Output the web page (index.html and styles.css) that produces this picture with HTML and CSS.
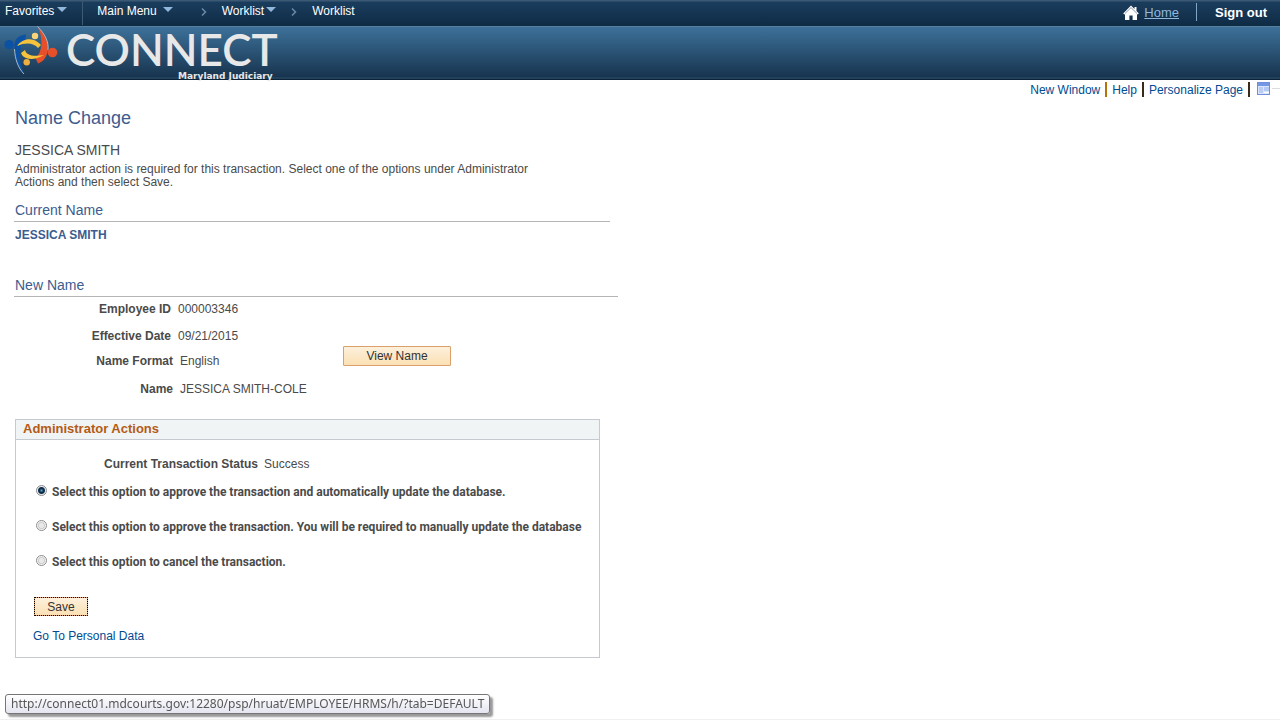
FILE: index.html
```html
<!DOCTYPE html>
<html lang="en">
<head>
<meta charset="utf-8">
<title>Name Change</title>
<link rel="stylesheet" href="styles.css">
</head>
<body>
<header>
  <nav class="topbar" aria-label="Main">
    <button class="menu favorites" type="button">Favorites <span class="caret"></span></button>
    <button class="menu mainmenu" type="button">Main Menu <span class="caret caret-far"></span></button>
    <svg class="chevron first" viewBox="0 0 6 8"><path d="M1 0.5 4.5 4 1 7.5"/></svg>
    <button class="menu" type="button">Worklist <span class="caret caret-near"></span></button>
    <svg class="chevron second" viewBox="0 0 6 8"><path d="M1 0.5 4.5 4 1 7.5"/></svg>
    <a class="crumb" href="#">Worklist</a>
    <div class="session">
      <a class="home" href="#">
        <svg class="home-icon" viewBox="0 0 16 16"><path d="M8 0.5 11.5 4V2h2v4l2.3 2.4-1.2 1.2L14 9v6H9.600v-4.500H6.400V15H2V9l-.6.6L.2 8.400z"/><path class="roof" d="M2 8.500 8 2.600l6 5.900"/></svg>
        <span>Home</span>
      </a>
      <a class="signout" href="#">Sign out</a>
    </div>
  </nav>
  <div class="banner">
    <svg class="logo" viewBox="0 0 56 52">
      <path class="blue" d="M24 7.500C16 8 11.500 13 12.500 22 13 32 16 41 22 47 18 38 17 27 19 19 20 17 24 14 24 7.500z"/>
      <path class="rim" d="M12.500 22C13 32 16 41 22 47"/>
      <circle class="blue" cx="7" cy="17.600" r="4.600"/>
      <path class="red" d="M35.500-.5C43 7 47 15 46 23 45 30 41 35 36 36.500L33.500 31C40 26 42 12 35.500-.5z"/>
      <path class="rim" d="M35.500-.5C43 7 47 15 46 23"/>
      <circle class="red" cx="50.500" cy="25.500" r="4.800"/>
      <path class="gold" d="M15 19C19 13 26 11 32 13c3 1 5 3 7 5l-3 3C32 16 24 15 15 19z"/>
      <path class="gold" d="M19 26l4-3c1 5 8 7 19 5C35 32 29 33 24 31c-3-1-4-3-5-5z"/>
      <circle class="pale" cx="33" cy="9" r="3.200"/>
      <circle class="amber" cx="24.700" cy="35.300" r="3.200"/>
    </svg>
    <div class="brand">
      <div class="brand-name">CONNECT</div>
      <div class="brand-sub">Maryland Judiciary</div>
    </div>
  </div>
</header>
<div class="pagebar">
  <a href="#">New Window</a><a href="#">Help</a><a href="#">Personalize Page</a>
  <svg class="grid-icon" viewBox="0 0 13 13"><rect x=".5" y=".5" width="12" height="12" fill="#d9e5fb" stroke="#6f8fdc"/><rect x="1" y="1" width="11" height="3" fill="#7596e4"/><path d="M2 6h4M2 8h4M2 10h4" stroke="#9bb3ea"/><rect x="7" y="5" width="5" height="4" fill="#b4c8f5"/><path d="M7 10.500h5" stroke="#fff"/></svg>
  <span class="rule"></span>
</div>
<main>
  <h1>Name Change</h1>
  <p class="person">JESSICA SMITH</p>
  <p class="intro">Administrator action is required for this transaction. Select one of the options under Administrator Actions and then select Save.</p>
  <section class="current">
    <h2>Current Name</h2>
    <p class="current-name">JESSICA SMITH</p>
  </section>
  <section class="newname">
    <h2>New Name</h2>
    <div class="details">
      <dl>
        <div class="row"><dt>Employee ID</dt><dd>000003346</dd></div>
        <div class="row close"><dt>Effective Date</dt><dd>09/21/2015</dd></div>
        <div class="row wide"><dt>Name Format</dt><dd>English</dd></div>
        <div class="row wide close"><dt>Name</dt><dd>JESSICA SMITH-COLE</dd></div>
      </dl>
      <button class="btn view" type="button">View Name</button>
    </div>
  </section>
  <form class="actions">
    <h3>Administrator Actions</h3>
    <div class="actions-body">
      <p class="status"><b>Current Transaction Status</b><span>Success</span></p>
      <label class="option"><input type="radio" name="action" checked><span>Select this option to approve the transaction and automatically update the database.</span></label>
      <label class="option"><input type="radio" name="action"><span>Select this option to approve the transaction. You will be required to manually update the database</span></label>
      <label class="option"><input type="radio" name="action"><span>Select this option to cancel the transaction.</span></label>
      <button class="btn save" type="button">Save</button>
      <a class="personal" href="#">Go To Personal Data</a>
    </div>
  </form>
</main>
<div class="url-tip">http://connect01.mdcourts.gov:12280/psp/hruat/EMPLOYEE/HRMS/h/?tab=DEFAULT</div>
</body>
</html>
```
FILE: styles.css
```css
* { box-sizing: border-box; }
body {
  margin: 0;
  min-height: 100vh;
  background: #fff;
  color: #4a4a4a;
  font: 12px/14px "Liberation Sans", Arial, sans-serif;
  border-bottom: 1px solid #f0f0f0;
}
h1, h2, h3, p, dl, dd { margin: 0; font-weight: normal; }
a { color: #004b91; text-decoration: none; }
button { font: inherit; cursor: pointer; }

.topbar {
  display: flex;
  align-items: flex-start;
  height: 26px;
  padding-left: 5px;
  background: linear-gradient(#3b5975 0, #3b5975 1px, #1b3d5d 2px, #0f2b45 100%);
}
.menu {
  display: flex;
  padding: 4px 0 0;
  border: 0;
  background: none;
  color: #fff;
  white-space: nowrap;
}
.favorites { height: 25px; padding-right: 15px; border-right: 1px solid #3d5a75; }
.mainmenu { padding-left: 14px; }
.caret {
  margin: 3px 0 0 3px;
  border: 5px solid transparent;
  border-top-color: #8fb8dc;
  border-bottom: 0;
}
.caret-far { margin-left: 6px; }
.caret-near { margin-left: 2px; }
.chevron { width: 6px; height: 8px; }
.chevron path { fill: none; stroke: #6b8aa6; stroke-width: 1.5; }
.first { margin: 8px 15px 0 28px; }
.second { margin: 8px 15px 0 15px; }
.crumb { padding-top: 4px; color: #fff; }
.session { display: flex; margin-left: auto; padding: 3px 13px 0 0; }
.home {
  display: flex;
  height: 18px;
  padding-right: 17px;
  border-right: 1px solid #7fa6c8;
  color: #8fb8dc;
  font-size: 13px;
  line-height: 20px;
  text-decoration: underline;
}
.home-icon { width: 16px; height: 16px; margin: 2px 5px 0 0; fill: #fff; }
.roof { fill: none; stroke: #8a98a8; stroke-width: 1; }
.signout { padding-left: 18px; color: #fff; font-size: 13px; font-weight: bold; line-height: 20px; }

.banner {
  display: flex;
  height: 54px;
  border-top: 1px solid #57809f;
  border-bottom: 1px solid #0c2438;
  background: linear-gradient(#3d719a, #17344f 50px, #2d4d67 51px, #17344f);
}
.logo { width: 56px; height: 52px; margin-left: 2px; overflow: visible; }
.blue { fill: #0b52a4; }
.red { fill: #e5502a; }
.gold { fill: #f7c23c; }
.pale { fill: #f8d577; }
.amber { fill: #eeae40; }
.rim { fill: none; stroke: #a9bac8; stroke-width: 1; }
.brand { margin-left: 8px; color: #e8e8e8; }
.brand-name { font: 600 44px/44px Lato, sans-serif; }
.brand-sub { padding-right: 5px; font: bold 9px/10px "DejaVu Sans", sans-serif; text-align: right; }

.pagebar { display: flex; justify-content: flex-end; height: 18px; padding-top: 2px; }
.pagebar a { height: 15px; padding: 1px 5px 0 5px; border-right: 2px solid #3a2a18; white-space: nowrap; }
.pagebar a:first-child { border-color: #b8720a; }
.grid-icon { width: 13px; height: 13px; margin-left: 7px; }
.rule { width: 8px; height: 1px; margin: 6px 0 0 2px; background: #ddd; }

main { padding: 9px 14px 0; }
h1, h2, .person, .intro, .current-name { padding-left: 1px; }
h1 { color: #3c5c8f; font-size: 18px; line-height: 22px; }
.person { margin-top: 13px; font-size: 14px; line-height: 16px; }
.intro { max-width: 530px; margin-top: 5px; line-height: 13px; }
h2 { color: #3c5c8f; font-size: 14px; line-height: 16px; padding-bottom: 3px; border-bottom: 1px solid #b5b5b5; }
.current { max-width: 596px; margin-top: 13px; }
.current-name { margin-top: 6px; color: #3c5c8f; font-weight: bold; }
.newname { max-width: 604px; margin-top: 35px; }
.details { display: flex; padding-top: 5px; }
.row { display: flex; gap: 7px; margin-bottom: 13px; }
dl { width: 329px; }
dt { width: 157px; font-weight: bold; text-align: right; }
.wide { margin-bottom: 14px; }
.wide dt { width: 159px; }
.close { margin-bottom: 11px; }
.btn {
  border: 1px solid #d9a06c;
  border-radius: 1px;
  background: linear-gradient(#fdf0dc, #fbe0b4);
  color: #333;
  padding: 0;
}
.view { width: 108px; height: 20px; margin-top: 44px; }

.actions { max-width: 585px; margin: 12px 0 0 1px; border: 1px solid #c6cad0; }
h3 {
  height: 20px;
  padding-left: 7px;
  border-bottom: 1px solid #c6cad0;
  background: #f0f4f5;
  color: #b35b16;
  font-size: 13px;
  font-weight: bold;
  line-height: 18px;
}
.actions-body { padding: 17px 0 14px 17px; }
.status { display: flex; gap: 6px; padding-left: 71px; }
.option { display: flex; margin: 14px 0 21px; font-family: Roboto, "Liberation Sans", sans-serif; font-weight: bold; white-space: nowrap; }
.option input {
  flex: none;
  appearance: none;
  width: 11px;
  height: 11px;
  margin: 0 5px 0 3px;
  border: 1px solid #8b8b8b;
  border-radius: 50%;
  background: radial-gradient(#e8e8e8 40%, #c8c8c8 45%, #fff 70%);
}
.option input:checked { background: radial-gradient(circle, #5f9fc0 0, #0d2f4e 2px, #0d2f4e 3px, #eee 4px); }
.save { display: block; width: 54px; height: 19px; margin: 28px 0 13px 1px; outline: 1px dotted #000; outline-offset: -1px; }
.personal { display: inline-block; }

.url-tip {
  position: fixed;
  left: 5px;
  bottom: 6px;
  padding: 1px 5px;
  border: 1px solid #767676;
  border-radius: 3px;
  background: linear-gradient(#fff, #e4e5f0);
  box-shadow: 3px 3px 2px #999;
  color: #575757;
  font: 12px/16px "Noto Sans", sans-serif;
}
```
